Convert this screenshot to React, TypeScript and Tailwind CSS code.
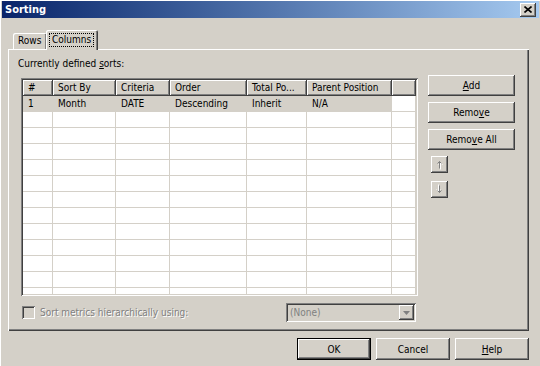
import React from "react";

const raised =
  "bg-[#d4d0c8] shadow-[inset_-1px_-1px_#404040,inset_1px_1px_#ffffff,inset_-2px_-2px_#808080,inset_2px_2px_#d4d0c8]";
const sunken =
  "shadow-[inset_1px_1px_#808080,inset_-1px_-1px_#ffffff,inset_2px_2px_#404040,inset_-2px_-2px_#d4d0c8]";

const cols = [
  { label: "#", w: 30, v: "1" },
  { label: "Sort By", w: 63, v: "Month" },
  { label: "Criteria", w: 54, v: "DATE" },
  { label: "Order", w: 77, v: "Descending" },
  { label: "Total Po...", w: 60, v: "Inherit" },
  { label: "Parent Position", w: 85, v: "N/A" },
];

function Btn({ children, w, h, def }: { children: React.ReactNode; w: number; h: number; def?: boolean }) {
  return (
    <div className={`${def ? "border border-black" : ""} flex`} style={{ width: w, height: h }}>
      <div className={`${raised} flex-1 flex items-center justify-center text-black`}>{children}</div>
    </div>
  );
}

function ArrowBtn({ down }: { down?: boolean }) {
  return (
    <div className={`${raised} w-[17px] h-[17px] flex items-center justify-center`}>
      <svg width="11" height="11" viewBox="0 0 11 11" className={down ? "rotate-180" : ""}>
        <g stroke="#ffffff" strokeWidth="1" fill="none" transform="translate(1,1)">
          <path d="M5.5 2.5 V9.5 M3.5 4.5 L5.5 2.5 L7.5 4.5" />
        </g>
        <g stroke="#808080" strokeWidth="1" fill="none">
          <path d="M5.5 2.5 V9.5 M3.5 4.5 L5.5 2.5 L7.5 4.5" />
        </g>
      </svg>
    </div>
  );
}

export default function App() {
  const rows = Array.from({ length: 13 });
  return (
    <div className="w-[540px] h-[366px] bg-[#d4d0c8] overflow-hidden relative font-['DejaVu_Sans_Condensed','Liberation_Sans',Arial,sans-serif] text-[10px] text-black shadow-[inset_1px_1px_#ffffff,inset_2px_0_#d4d0c8]">
      {/* Title bar */}
      <div className="mt-[1px] ml-[2px] mr-[1px] h-[17px] bg-gradient-to-r from-[#0a246a] to-[#a6caf0] flex items-center">
        <div className="pl-[3px] text-white font-bold text-[11px] leading-none">Sorting</div>
        <div className="ml-auto mr-[3px] w-[16px] h-[14px] flex">
          <div className={`${raised} flex-1 flex items-center justify-center`}>
            <svg width="8" height="7" viewBox="0 0 8 7">
              <path d="M0.5 0.5 L7.5 6.5 M7.5 0.5 L0.5 6.5" stroke="#000" strokeWidth="1.6" />
            </svg>
          </div>
        </div>
      </div>

      {/* Tabs */}
      <div className="relative z-10 mt-[12px] ml-[13px] h-[20px] flex items-end">
        <div className="mb-[1px] w-[34px] h-[16px] rounded-t-[2px] shadow-[inset_1px_1px_#ffffff,inset_-1px_0_#404040,inset_-2px_0_#808080] bg-[#d4d0c8] flex items-center pl-[5px] leading-none">
          Rows
        </div>
        <div className="-ml-[1px] w-[52px] h-[20px] rounded-t-[2px] shadow-[inset_1px_1px_#ffffff,inset_-1px_0_#404040,inset_-2px_0_#808080] bg-[#d4d0c8] flex items-start pt-[3px] pl-[3px]">
          <span className="border border-dotted border-black px-[2px] leading-[12px]">Columns</span>
        </div>
      </div>

      {/* Panel */}
      <div className="-mt-[1px] ml-[8px] w-[521px] h-[282px] shadow-[inset_1px_1px_#ffffff,inset_-1px_-1px_#404040,inset_-2px_-2px_#808080] flex">
        <div className="pl-[10px] pt-[8px] w-[410px] flex flex-col">
          <div className="h-[13px] leading-[13px]">
            Currently defined <u>s</u>orts:
          </div>
          <div className={`mt-[8px] ml-[3px] w-[397px] h-[218px] bg-white p-[2px] ${sunken}`}>
            <div className="w-full h-full overflow-hidden">
              <div className="flex h-[16px]">
                {cols.map((c) => (
                  <div
                    key={c.label}
                    style={{ width: c.w }}
                    className={`${raised} shrink-0 h-[16px] pl-[5px] leading-[15px] whitespace-nowrap overflow-hidden`}
                  >
                    {c.label}
                  </div>
                ))}
                <div className={`${raised} flex-1 h-[16px]`} />
              </div>
              {rows.map((_, i) => (
                <div key={i} className="flex h-[16px]">
                  {cols.map((c) => (
                    <div
                      key={c.label}
                      style={{ width: c.w }}
                      className={`shrink-0 h-[16px] border-r border-b border-[#d4d0c8] pl-[5px] leading-[15px] whitespace-nowrap ${i === 0 ? "bg-[#d4d0c8]" : ""}`}
                    >
                      {i === 0 ? c.v : ""}
                    </div>
                  ))}
                  <div className="flex-1 h-[16px] border-r border-b border-[#d4d0c8]" />
                </div>
              ))}
            </div>
          </div>
          <div className="mt-[7px] h-[19px] flex items-center">
            <div className={`ml-[4px] w-[13px] h-[13px] bg-[#d4d0c8] ${sunken}`} />
            <div className="ml-[5px] text-[#808080] [text-shadow:1px_1px_0_#ffffff]">
              Sort metrics hierarchically using:
            </div>
            <div className={`ml-auto mr-[2px] w-[130px] h-[19px] bg-[#d4d0c8] p-[2px] flex ${sunken}`}>
              <div className="flex-1 pl-[2px] leading-[15px] text-[#808080]">(None)</div>
              <div className={`${raised} w-[15px] h-[15px] flex items-center justify-center`}>
                <svg width="7" height="4" viewBox="0 0 7 4">
                  <path d="M0 0 H7 L3.5 4 Z" fill="#808080" />
                </svg>
              </div>
            </div>
          </div>
        </div>
        <div className="ml-[10px] pt-[26px] flex flex-col">
          <Btn w={87} h={21}>
            <span>
              <u>A</u>dd
            </span>
          </Btn>
          <div className="h-[6px]" />
          <Btn w={87} h={21}>
            <span>
              Remo<u>v</u>e
            </span>
          </Btn>
          <div className="h-[6px]" />
          <Btn w={87} h={21}>
            <span>
              Remo<u>v</u>e All
            </span>
          </Btn>
          <div className="h-[6px]" />
          <div className="ml-[3px]">
            <ArrowBtn />
          </div>
          <div className="h-[8px]" />
          <div className="ml-[3px]">
            <ArrowBtn down />
          </div>
        </div>
      </div>

      {/* Bottom buttons */}
      <div className="mt-[7px] pr-[11px] flex justify-end gap-[5px]">
        <Btn w={74} h={22} def>
          OK
        </Btn>
        <Btn w={74} h={22}>
          Cancel
        </Btn>
        <Btn w={74} h={22}>
          <span>
            <u>H</u>elp
          </span>
        </Btn>
      </div>
    </div>
  );
}
